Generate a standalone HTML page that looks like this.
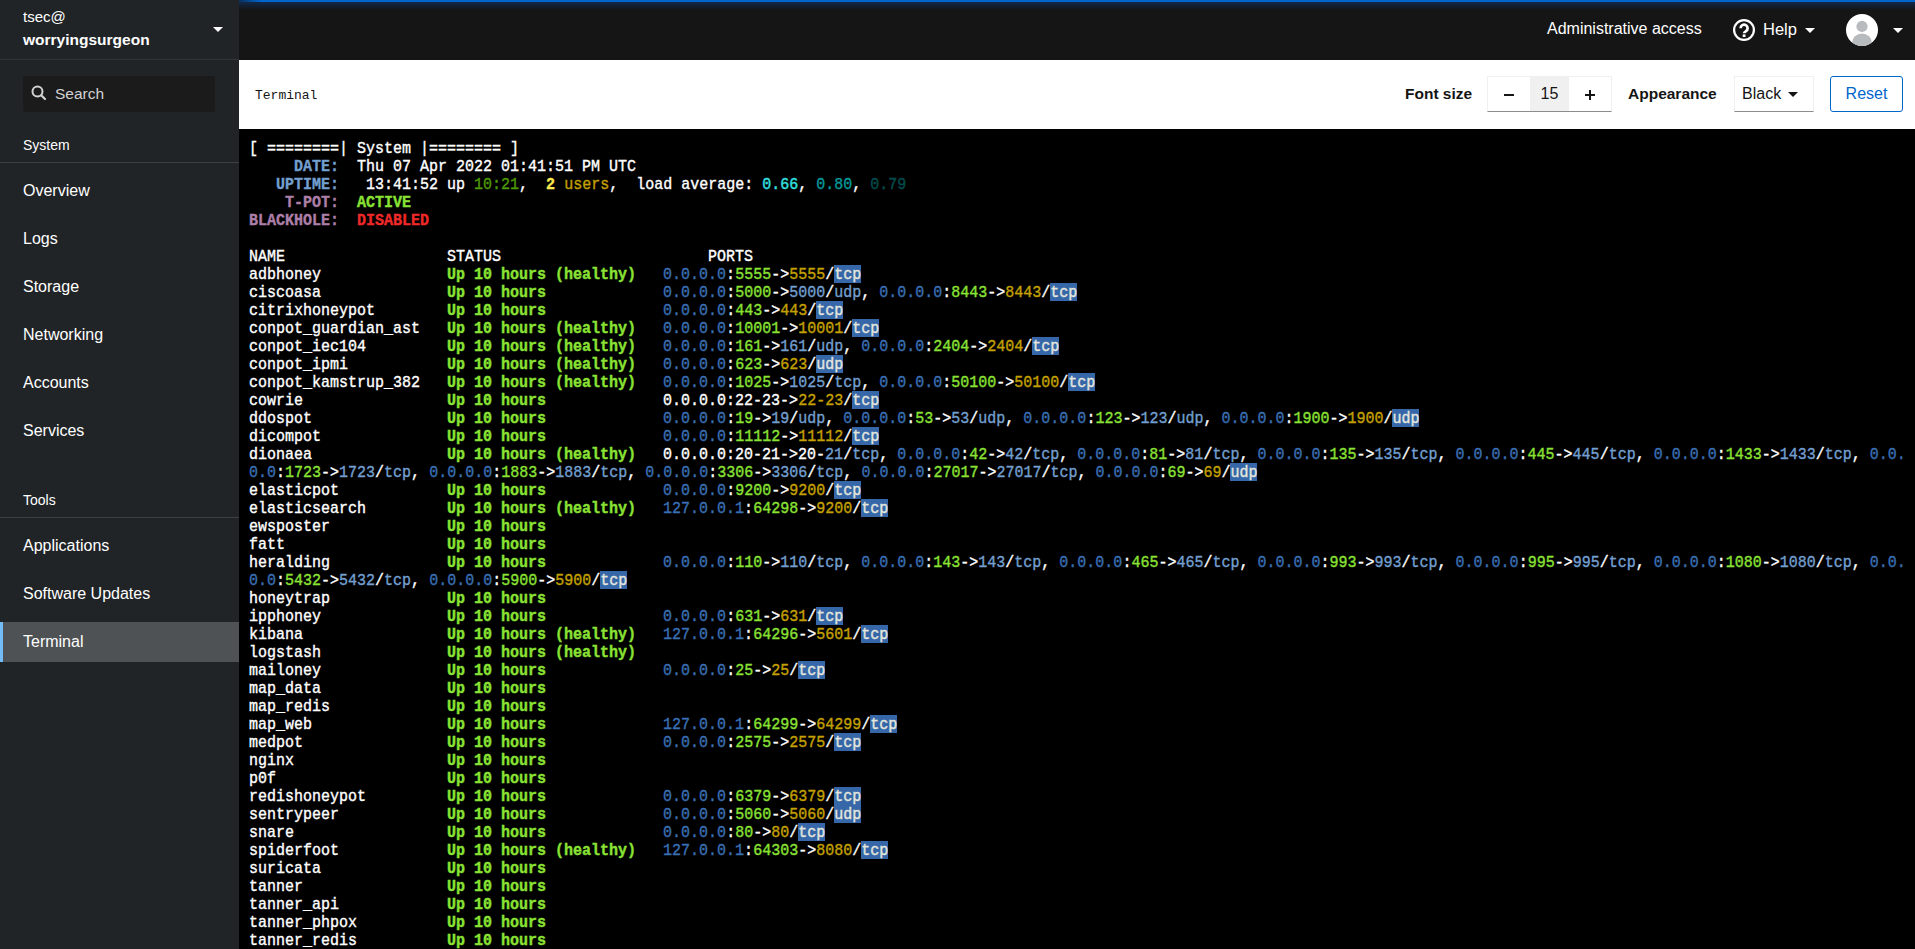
<!DOCTYPE html>
<html><head><meta charset="utf-8">
<style>
*{box-sizing:border-box;margin:0;padding:0}
html,body{width:1915px;height:949px;overflow:hidden;background:#000;font-family:"Liberation Sans",sans-serif}
#side{position:absolute;left:0;top:0;width:239px;height:949px;background:#212427;color:#fff}
#side .host{position:absolute;left:0;top:0;width:239px;height:60px;border-bottom:1px solid #333435}
#side .host .u{position:absolute;left:23px;top:8px;font-size:15px;line-height:18px}
#side .host .h{position:absolute;left:23px;top:31px;font-size:15.5px;font-weight:bold;line-height:18px}
.caret{position:absolute;width:0;height:0;border-left:5px solid transparent;border-right:5px solid transparent;border-top:5px solid #fff}
#side .search{position:absolute;left:23px;top:76px;width:192px;height:36px;background:#1b1b1c;border-radius:3px}
#side .search .t{position:absolute;left:32px;top:9px;font-size:15.5px;line-height:18px;color:#d2d2d2}
#side .sec{position:absolute;left:23px;font-size:14px;line-height:16px;color:#fff}
#side .sep{position:absolute;left:0;width:239px;height:1px;background:#3c3f42}
#side .nav{position:absolute;left:0;width:239px;height:40px;font-size:16px;line-height:18px}
#side .nav span{position:absolute;left:23px;top:11px}
#side .nav.act{background:#4f5255}
#side .nav.act::before{content:"";position:absolute;left:0;top:0;width:3px;height:40px;background:#73bcf7}
#hdr{position:absolute;left:239px;top:0;width:1676px;height:60px;background:#151515;color:#fff}
#hdr .topbar{position:absolute;left:0;top:0;width:100%;height:2px;background:linear-gradient(90deg,#0b2f5a 0,#0066cc 22px)}
#hdr .shadow{position:absolute;left:0;top:2px;width:100%;height:8px;background:linear-gradient(#10294a,#151515)}
#hdr .adm{position:absolute;left:1308px;top:20px;font-size:16px;line-height:18px}
#hdr .help{position:absolute;left:1524px;top:20px;font-size:16.5px;line-height:18px}
#tool{position:absolute;left:239px;top:60px;width:1676px;height:69px;background:#fff;color:#151515}
#tool .title{position:absolute;left:16px;top:28px;font-family:"Liberation Mono",monospace;font-size:13px;line-height:16px}
#tool .lbl{position:absolute;top:25px;font-size:15.5px;font-weight:bold;line-height:18px}
#tool .ig{position:absolute;left:1248px;top:16px;width:125px;height:36px;border:1px solid #f0f0f0;border-bottom:1px solid #8a8d90}
#tool .ig .mid{position:absolute;left:42px;top:0;width:39px;height:34px;background:#f0f0f0}
#tool .sel{position:absolute;left:1495px;top:16px;width:80px;height:36px;border:1px solid #f0f0f0;border-bottom:1px solid #8a8d90}
#tool .reset{position:absolute;left:1591px;top:16px;width:73px;height:36px;border:1px solid #0066cc;border-radius:3px;color:#0066cc;font-size:16px}
#term{position:absolute;left:239px;top:129px;width:1676px;height:820px;background:#000;padding:12px 0 0 10px;font-family:"Liberation Mono",monospace;font-size:15px;color:#fff;-webkit-text-stroke:0.35px}
.r{height:18px;line-height:18px;white-space:pre;transform:scaleY(1.09);transform-origin:0 12px}
.lbB{color:#729fcf;font-weight:bold}
.mgB{color:#ad7fa8;font-weight:bold}
.grB{color:#8ae234;font-weight:bold}
.rdB{color:#ef2929;font-weight:bold}
.ybB{color:#fce94f;font-weight:bold}
.dg{color:#4e9a06}
.y{color:#c4a000}
.cb{color:#34e2e2}
.c{color:#06989a}
.cd{color:#034c4d}
.b{color:#3a6fb3}
.lb{color:#729fcf}
.gr{color:#8ae234}
.hl{color:#e4e6de}
.hb{position:absolute;height:18px;background:#3667a8}
#hbl{position:absolute;left:-239px;top:-129px}
.r{position:relative}
</style></head><body>
<div id="side">
  <div class="host"><div class="u">tsec@</div><div class="h">worryingsurgeon</div><div class="caret" style="left:213px;top:27px"></div></div>
  <div class="search">
    <svg style="position:absolute;left:8px;top:9px" width="16" height="16" viewBox="0 0 16 16"><circle cx="6.5" cy="6.5" r="5" fill="none" stroke="#d2d2d2" stroke-width="2"/><path d="M10.2 10.2 L14 14" stroke="#d2d2d2" stroke-width="2.2" stroke-linecap="round"/></svg>
    <div class="t">Search</div>
  </div>
  <div class="sec" style="top:137px">System</div>
  <div class="sep" style="top:162px"></div>
  <div class="nav" style="top:171px"><span>Overview</span></div>
  <div class="nav" style="top:219px"><span>Logs</span></div>
  <div class="nav" style="top:267px"><span>Storage</span></div>
  <div class="nav" style="top:315px"><span>Networking</span></div>
  <div class="nav" style="top:363px"><span>Accounts</span></div>
  <div class="nav" style="top:411px"><span>Services</span></div>
  <div class="sec" style="top:492px">Tools</div>
  <div class="sep" style="top:517px"></div>
  <div class="nav" style="top:526px"><span>Applications</span></div>
  <div class="nav" style="top:574px"><span>Software Updates</span></div>
  <div class="nav act" style="top:622px"><span>Terminal</span></div>
</div>
<div id="hdr">
  <div class="topbar"></div><div class="shadow"></div>
  <div class="adm">Administrative access</div>
  <svg style="position:absolute;left:1494px;top:19px" width="22" height="22" viewBox="0 0 22 22"><circle cx="11" cy="11" r="9.9" fill="none" stroke="#fff" stroke-width="2.2"/><path d="M7.6 9.2 A3.5 3.5 0 1 1 12.9 12.2 C11.8 12.9 11.1 13.3 11.1 14.3" fill="none" stroke="#fff" stroke-width="2.7"/><rect x="9.7" y="15.4" width="2.8" height="2.6" fill="#fff"/></svg>
  <div class="help">Help</div>
  <div class="caret" style="left:1566px;top:28px"></div>
  <svg style="position:absolute;left:1607px;top:14px" width="32" height="32" viewBox="0 0 32 32"><defs><clipPath id="cc"><circle cx="16" cy="16" r="16"/></clipPath></defs><circle cx="16" cy="16" r="16" fill="#fff"/><g clip-path="url(#cc)" fill="#b8bbbe"><circle cx="16" cy="12.4" r="5.6"/><ellipse cx="16" cy="29" rx="10" ry="9.5"/></g></svg>
  <div class="caret" style="left:1654px;top:28px"></div>
</div>
<div id="tool">
  <div class="title">Terminal</div>
  <div class="lbl" style="left:1166px">Font size</div>
  <div class="ig"><div class="mid"></div>
    <div style="position:absolute;left:15.8px;top:16.5px;width:10px;height:2.5px;background:#151515"></div>
    <div style="position:absolute;left:43px;top:8px;width:37px;text-align:center;font-size:16px;line-height:18px;color:#151515">15</div>
    <div style="position:absolute;left:96.8px;top:16.8px;width:10.5px;height:2.5px;background:#151515"></div>
    <div style="position:absolute;left:100.8px;top:12.8px;width:2.5px;height:10.5px;background:#151515"></div>
  </div>
  <div class="lbl" style="left:1389px">Appearance</div>
  <div class="sel"><div style="position:absolute;left:7px;top:8px;font-size:16px;line-height:18px">Black</div><div class="caret" style="left:53px;top:15px;border-top-color:#151515"></div></div>
  <div class="reset"><div style="position:absolute;left:0;width:71px;top:8px;text-align:center;line-height:18px">Reset</div></div>
</div>
<div id="term">
<div id="hbl"><div class="hb" style="left:834px;top:265px;width:27px"></div><div class="hb" style="left:1050px;top:283px;width:27px"></div><div class="hb" style="left:816px;top:301px;width:27px"></div><div class="hb" style="left:852px;top:319px;width:27px"></div><div class="hb" style="left:1032px;top:337px;width:27px"></div><div class="hb" style="left:816px;top:355px;width:27px"></div><div class="hb" style="left:1068px;top:373px;width:27px"></div><div class="hb" style="left:852px;top:391px;width:27px"></div><div class="hb" style="left:1392px;top:409px;width:27px"></div><div class="hb" style="left:852px;top:427px;width:27px"></div><div class="hb" style="left:1230px;top:463px;width:27px"></div><div class="hb" style="left:834px;top:481px;width:27px"></div><div class="hb" style="left:861px;top:499px;width:27px"></div><div class="hb" style="left:600px;top:571px;width:27px"></div><div class="hb" style="left:816px;top:607px;width:27px"></div><div class="hb" style="left:861px;top:625px;width:27px"></div><div class="hb" style="left:798px;top:661px;width:27px"></div><div class="hb" style="left:870px;top:715px;width:27px"></div><div class="hb" style="left:834px;top:733px;width:27px"></div><div class="hb" style="left:834px;top:787px;width:27px"></div><div class="hb" style="left:834px;top:805px;width:27px"></div><div class="hb" style="left:798px;top:823px;width:27px"></div><div class="hb" style="left:861px;top:841px;width:27px"></div></div><div class="r">[ ========| System |======== ]</div>
<div class="r">     <span class="lbB">DATE:</span>  Thu 07 Apr 2022 01:41:51 PM UTC</div>
<div class="r">   <span class="lbB">UPTIME:</span>   13:41:52 up <span class="dg">10:21</span>,  <span class="ybB">2</span> <span class="y">users</span>,  load average: <span class="cb">0.66</span>, <span class="c">0.80</span>, <span class="cd">0.79</span></div>
<div class="r">    <span class="mgB">T-POT:</span>  <span class="grB">ACTIVE</span></div>
<div class="r"><span class="mgB">BLACKHOLE:</span>  <span class="rdB">DISABLED</span></div>
<div class="r"></div>
<div class="r">NAME                  STATUS                       PORTS</div>
<div class="r">adbhoney              <span class="grB">Up 10 hours (healthy)</span>   <span class="b">0.0.0.0</span>:<span class="gr">5555</span>-&gt;<span class="y">5555</span>/<span class="hl">tcp</span></div>
<div class="r">ciscoasa              <span class="grB">Up 10 hours</span>             <span class="b">0.0.0.0</span>:<span class="gr">5000</span>-&gt;<span class="lb">5000</span>/<span class="lb">udp</span>, <span class="b">0.0.0.0</span>:<span class="gr">8443</span>-&gt;<span class="y">8443</span>/<span class="hl">tcp</span></div>
<div class="r">citrixhoneypot        <span class="grB">Up 10 hours</span>             <span class="b">0.0.0.0</span>:<span class="gr">443</span>-&gt;<span class="y">443</span>/<span class="hl">tcp</span></div>
<div class="r">conpot_guardian_ast   <span class="grB">Up 10 hours (healthy)</span>   <span class="b">0.0.0.0</span>:<span class="gr">10001</span>-&gt;<span class="y">10001</span>/<span class="hl">tcp</span></div>
<div class="r">conpot_iec104         <span class="grB">Up 10 hours (healthy)</span>   <span class="b">0.0.0.0</span>:<span class="gr">161</span>-&gt;<span class="lb">161</span>/<span class="lb">udp</span>, <span class="b">0.0.0.0</span>:<span class="gr">2404</span>-&gt;<span class="y">2404</span>/<span class="hl">tcp</span></div>
<div class="r">conpot_ipmi           <span class="grB">Up 10 hours (healthy)</span>   <span class="b">0.0.0.0</span>:<span class="gr">623</span>-&gt;<span class="y">623</span>/<span class="hl">udp</span></div>
<div class="r">conpot_kamstrup_382   <span class="grB">Up 10 hours (healthy)</span>   <span class="b">0.0.0.0</span>:<span class="gr">1025</span>-&gt;<span class="lb">1025</span>/<span class="lb">tcp</span>, <span class="b">0.0.0.0</span>:<span class="gr">50100</span>-&gt;<span class="y">50100</span>/<span class="hl">tcp</span></div>
<div class="r">cowrie                <span class="grB">Up 10 hours</span>             0.0.0.0:22-23-&gt;<span class="y">22-23</span>/<span class="hl">tcp</span></div>
<div class="r">ddospot               <span class="grB">Up 10 hours</span>             <span class="b">0.0.0.0</span>:<span class="gr">19</span>-&gt;<span class="lb">19</span>/<span class="lb">udp</span>, <span class="b">0.0.0.0</span>:<span class="gr">53</span>-&gt;<span class="lb">53</span>/<span class="lb">udp</span>, <span class="b">0.0.0.0</span>:<span class="gr">123</span>-&gt;<span class="lb">123</span>/<span class="lb">udp</span>, <span class="b">0.0.0.0</span>:<span class="gr">1900</span>-&gt;<span class="y">1900</span>/<span class="hl">udp</span></div>
<div class="r">dicompot              <span class="grB">Up 10 hours</span>             <span class="b">0.0.0.0</span>:<span class="gr">11112</span>-&gt;<span class="y">11112</span>/<span class="hl">tcp</span></div>
<div class="r">dionaea               <span class="grB">Up 10 hours (healthy)</span>   0.0.0.0:20-21-&gt;20-<span class="lb">21</span>/<span class="lb">tcp</span>, <span class="b">0.0.0.0</span>:<span class="gr">42</span>-&gt;<span class="lb">42</span>/<span class="lb">tcp</span>, <span class="b">0.0.0.0</span>:<span class="gr">81</span>-&gt;<span class="lb">81</span>/<span class="lb">tcp</span>, <span class="b">0.0.0.0</span>:<span class="gr">135</span>-&gt;<span class="lb">135</span>/<span class="lb">tcp</span>, <span class="b">0.0.0.0</span>:<span class="gr">445</span>-&gt;<span class="lb">445</span>/<span class="lb">tcp</span>, <span class="b">0.0.0.0</span>:<span class="gr">1433</span>-&gt;<span class="lb">1433</span>/<span class="lb">tcp</span>, <span class="b">0.0.</span></div>
<div class="r"><span class="b">0.0</span>:<span class="gr">1723</span>-&gt;<span class="lb">1723</span>/<span class="lb">tcp</span>, <span class="b">0.0.0.0</span>:<span class="gr">1883</span>-&gt;<span class="lb">1883</span>/<span class="lb">tcp</span>, <span class="b">0.0.0.0</span>:<span class="gr">3306</span>-&gt;<span class="lb">3306</span>/<span class="lb">tcp</span>, <span class="b">0.0.0.0</span>:<span class="gr">27017</span>-&gt;<span class="lb">27017</span>/<span class="lb">tcp</span>, <span class="b">0.0.0.0</span>:<span class="gr">69</span>-&gt;<span class="y">69</span>/<span class="hl">udp</span></div>
<div class="r">elasticpot            <span class="grB">Up 10 hours</span>             <span class="b">0.0.0.0</span>:<span class="gr">9200</span>-&gt;<span class="y">9200</span>/<span class="hl">tcp</span></div>
<div class="r">elasticsearch         <span class="grB">Up 10 hours (healthy)</span>   <span class="b">127.0.0.1</span>:<span class="gr">64298</span>-&gt;<span class="y">9200</span>/<span class="hl">tcp</span></div>
<div class="r">ewsposter             <span class="grB">Up 10 hours</span></div>
<div class="r">fatt                  <span class="grB">Up 10 hours</span></div>
<div class="r">heralding             <span class="grB">Up 10 hours</span>             <span class="b">0.0.0.0</span>:<span class="gr">110</span>-&gt;<span class="lb">110</span>/<span class="lb">tcp</span>, <span class="b">0.0.0.0</span>:<span class="gr">143</span>-&gt;<span class="lb">143</span>/<span class="lb">tcp</span>, <span class="b">0.0.0.0</span>:<span class="gr">465</span>-&gt;<span class="lb">465</span>/<span class="lb">tcp</span>, <span class="b">0.0.0.0</span>:<span class="gr">993</span>-&gt;<span class="lb">993</span>/<span class="lb">tcp</span>, <span class="b">0.0.0.0</span>:<span class="gr">995</span>-&gt;<span class="lb">995</span>/<span class="lb">tcp</span>, <span class="b">0.0.0.0</span>:<span class="gr">1080</span>-&gt;<span class="lb">1080</span>/<span class="lb">tcp</span>, <span class="b">0.0.</span></div>
<div class="r"><span class="b">0.0</span>:<span class="gr">5432</span>-&gt;<span class="lb">5432</span>/<span class="lb">tcp</span>, <span class="b">0.0.0.0</span>:<span class="gr">5900</span>-&gt;<span class="y">5900</span>/<span class="hl">tcp</span></div>
<div class="r">honeytrap             <span class="grB">Up 10 hours</span></div>
<div class="r">ipphoney              <span class="grB">Up 10 hours</span>             <span class="b">0.0.0.0</span>:<span class="gr">631</span>-&gt;<span class="y">631</span>/<span class="hl">tcp</span></div>
<div class="r">kibana                <span class="grB">Up 10 hours (healthy)</span>   <span class="b">127.0.0.1</span>:<span class="gr">64296</span>-&gt;<span class="y">5601</span>/<span class="hl">tcp</span></div>
<div class="r">logstash              <span class="grB">Up 10 hours (healthy)</span></div>
<div class="r">mailoney              <span class="grB">Up 10 hours</span>             <span class="b">0.0.0.0</span>:<span class="gr">25</span>-&gt;<span class="y">25</span>/<span class="hl">tcp</span></div>
<div class="r">map_data              <span class="grB">Up 10 hours</span></div>
<div class="r">map_redis             <span class="grB">Up 10 hours</span></div>
<div class="r">map_web               <span class="grB">Up 10 hours</span>             <span class="b">127.0.0.1</span>:<span class="gr">64299</span>-&gt;<span class="y">64299</span>/<span class="hl">tcp</span></div>
<div class="r">medpot                <span class="grB">Up 10 hours</span>             <span class="b">0.0.0.0</span>:<span class="gr">2575</span>-&gt;<span class="y">2575</span>/<span class="hl">tcp</span></div>
<div class="r">nginx                 <span class="grB">Up 10 hours</span></div>
<div class="r">p0f                   <span class="grB">Up 10 hours</span></div>
<div class="r">redishoneypot         <span class="grB">Up 10 hours</span>             <span class="b">0.0.0.0</span>:<span class="gr">6379</span>-&gt;<span class="y">6379</span>/<span class="hl">tcp</span></div>
<div class="r">sentrypeer            <span class="grB">Up 10 hours</span>             <span class="b">0.0.0.0</span>:<span class="gr">5060</span>-&gt;<span class="y">5060</span>/<span class="hl">udp</span></div>
<div class="r">snare                 <span class="grB">Up 10 hours</span>             <span class="b">0.0.0.0</span>:<span class="gr">80</span>-&gt;<span class="y">80</span>/<span class="hl">tcp</span></div>
<div class="r">spiderfoot            <span class="grB">Up 10 hours (healthy)</span>   <span class="b">127.0.0.1</span>:<span class="gr">64303</span>-&gt;<span class="y">8080</span>/<span class="hl">tcp</span></div>
<div class="r">suricata              <span class="grB">Up 10 hours</span></div>
<div class="r">tanner                <span class="grB">Up 10 hours</span></div>
<div class="r">tanner_api            <span class="grB">Up 10 hours</span></div>
<div class="r">tanner_phpox          <span class="grB">Up 10 hours</span></div>
<div class="r">tanner_redis          <span class="grB">Up 10 hours</span></div>
</div>
</body></html>
